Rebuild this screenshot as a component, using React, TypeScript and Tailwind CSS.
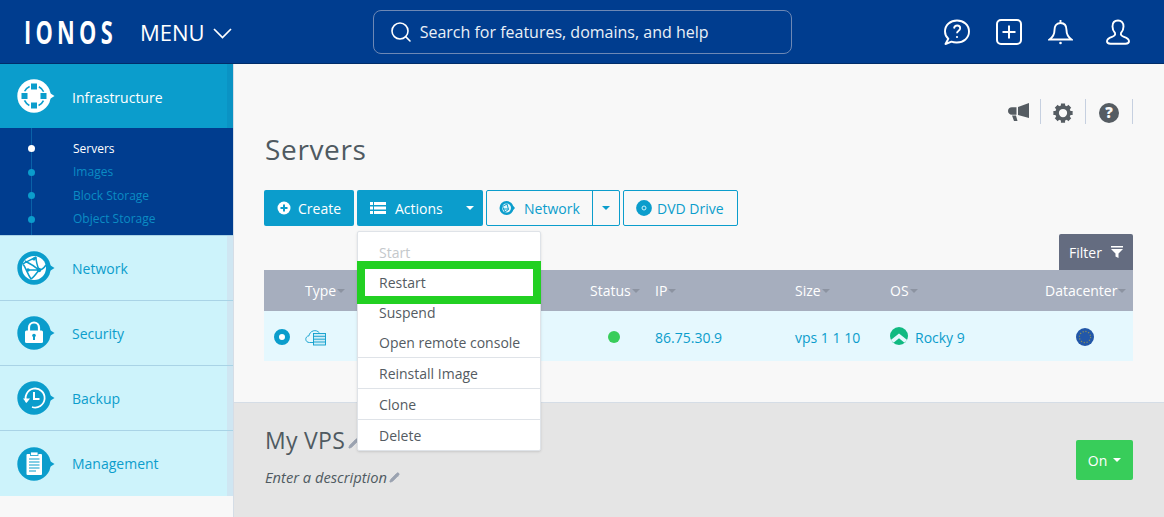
import React from "react";
import { Search, Pencil } from "lucide-react";

function Bubble({ children, light }: { children: React.ReactNode; light?: boolean }) {
  const bg = light ? "#ffffff" : "#0b9dcc";
  return (
    <svg width="38" height="34" viewBox="0 0 38 34" className="shrink-0">
      <circle cx="17" cy="17" r="16.7" fill={bg} />
      <path d="M32 13.5L37.5 17L32 20.5Z" fill={bg} />
      {children}
    </svg>
  );
}

const InfraIcon = () => (
  <Bubble light>
    <circle cx="17" cy="17" r="10.5" fill="none" stroke="#0b9dcc" strokeWidth="1.6" strokeDasharray="7 9.5" strokeDashoffset="-4.700" />
    <rect x="14" y="4.500" width="6" height="6" fill="#0b9dcc" />
    <rect x="14" y="23.500" width="6" height="6" fill="#0b9dcc" />
    <rect x="4.500" y="14" width="6" height="6" fill="#0b9dcc" />
    <rect x="23.500" y="14" width="6" height="6" fill="#0b9dcc" />
  </Bubble>
);
const NetIcon = () => (
  <Bubble>
    <circle cx="17" cy="17" r="12" fill="#fff" />
    <path d="M6 13C10 10 14 9 19 6M6 13C9 17 10 22 14 28M19 6C19 10 20 14 22 19M10 19C14 19 18 19 22 19M22 19C19 23 17 26 14 28M22 19C25 19 27 17 29 14M8 10C12 12 16 14 22 19" fill="none" stroke="#0b9dcc" strokeWidth="1.500" />
    <circle cx="22" cy="19" r="2.200" fill="#0b9dcc" />
    <circle cx="11" cy="19" r="1.800" fill="#0b9dcc" />
    <circle cx="17" cy="8" r="1.600" fill="#0b9dcc" />
  </Bubble>
);
const LockIcon = () => (
  <Bubble>
    <path d="M12 15V11.5a5 5 0 0 1 10 0V15" fill="none" stroke="#fff" strokeWidth="2.2" />
    <rect x="8" y="14.5" width="18" height="12.5" rx="1.5" fill="#fff" />
    <circle cx="17" cy="19.5" r="1.8" fill="#0b9dcc" />
    <rect x="16" y="20" width="2" height="4" fill="#0b9dcc" />
  </Bubble>
);
const ClockIcon = () => (
  <Bubble>
    <path d="M9.5 21A9.5 9.5 0 1 1 15 26" fill="none" stroke="#fff" strokeWidth="1.8" />
    <path d="M6 17.5L9.5 22L13 17.5Z" fill="#fff" />
    <path d="M17 11V18H22.5" fill="none" stroke="#fff" strokeWidth="2" />
  </Bubble>
);
const ClipIcon = () => (
  <Bubble>
    <rect x="9.5" y="7" width="15.5" height="21" rx="1" fill="#fff" />
    <rect x="13.5" y="5" width="7.5" height="3.5" fill="#fff" stroke="#0b9dcc" strokeWidth="0.8" />
    <path d="M12 12H22.5M12 15H22.5M12 18H22.5M12 21H22.5M12 24H19" stroke="#0b9dcc" strokeWidth="1.2" />
  </Bubble>
);

function SideItem({ icon, label }: { icon: React.ReactNode; label: string }) {
  return (
    <div className="relative flex h-[65px] items-center border-b border-[#a9d3e6] bg-[#cdf3fb] pl-[17px] last:border-b-0">
      {icon}
      <span className="ml-[17px] text-[14px] text-[#0b9dcc]">{label}</span>
      <div className="absolute inset-y-0 right-0 w-[6px] bg-[#cfe6f2]" />
    </div>
  );
}

function SubItem({ label, active }: { label: string; active?: boolean }) {
  return (
    <div className="flex h-[23.4px] items-center">
      <span className={`relative ml-[28px] h-[7px] w-[7px] rounded-full ${active ? "bg-white" : "bg-[#0b9dcc]"}`} />
      <span className={`ml-[38px] text-[12px] ${active ? "text-white" : "text-[#0b8cc4]"}`}>{label}</span>
    </div>
  );
}

const Caret = ({ className = "border-t-[#8c93a1]" }: { className?: string }) => (
  <span className={`inline-block h-0 w-0 border-x-[4px] border-t-[4px] border-x-transparent ${className}`} />
);

const Th = ({ label }: { label: string }) => (
  <div className="flex items-center gap-[1px] text-[14px] text-white">
    {label}
    <Caret />
  </div>
);

const PlusCircle = () => (
  <svg width="14" height="14" viewBox="0 0 14 14">
    <circle cx="7" cy="7" r="6.5" fill="#fff" />
    <path d="M7 3.5V10.5M3.5 7H10.5" stroke="#0b9dcc" strokeWidth="2" />
  </svg>
);
const ListIcon = () => (
  <svg width="16" height="12" viewBox="0 0 16 12" fill="#fff">
    <path d="M0 0H3V3H0ZM4 0H16V3H4ZM0 4.5H3V7.5H0ZM4 4.5H16V7.5H4ZM0 9H3V12H0ZM4 9H16V12H4Z" />
  </svg>
);
const NetSmall = () => (
  <svg width="16" height="16" viewBox="0 0 16 16">
    <circle cx="7.500" cy="8" r="7" fill="#0b9dcc" />
    <path d="M14 5.800L16 8L14 10.200Z" fill="#0b9dcc" />
    <circle cx="7.500" cy="8" r="4.500" fill="#e5f6fb" />
    <path d="M3.500 6.500L8 4M3.500 6.500L6 12M8 4L9.500 9.500M6 12L9.500 9.500M3.500 9H9.500" stroke="#0b9dcc" strokeWidth="1" fill="none" />
  </svg>
);
const DiscIcon = () => (
  <svg width="16" height="16" viewBox="0 0 16 16">
    <circle cx="8" cy="8" r="7.900" fill="#0b9dcc" />
    <circle cx="8" cy="8" r="2" fill="none" stroke="#cdf3fb" strokeWidth="1" />
  </svg>
);
const CloudServer = () => (
  <svg width="21" height="18" viewBox="0 0 21 18" fill="none" stroke="#0b9dcc" strokeWidth="0.9">
    <path d="M8 14.5H4.5C-0.5 14.5 -0.2 8 4 7.8C4.6 3 11 0.5 14.5 5" />
    <rect x="8.5" y="5.5" width="12" height="11.5" fill="#cfeef8" />
    <path d="M8.5 8.3H20.5M8.5 11.2H20.5M8.5 14H20.5" />
  </svg>
);
const Rocky = () => (
  <svg width="18" height="18" viewBox="0 0 18 18" className="-mt-[3px]">
    <circle cx="9" cy="9" r="9" fill="#10b981" />
    <path d="M0.800 13L9 6.500L17.200 13L14.500 15.800L9 11.300L3.500 15.800Z" fill="#e5f8fe" />
  </svg>
);
const EuFlag = () => (
  <svg width="18" height="18" viewBox="0 0 18 18" className="-mt-[1px]">
    <circle cx="9" cy="9" r="9" fill="#2257a8" />
    <circle cx="9" cy="9" r="5.6" fill="none" stroke="#8a8f5a" strokeWidth="1.2" strokeDasharray="1.2 1.7" />
  </svg>
);

const Divider = () => <div className="h-[25px] w-px bg-[#c6d0e0]" />;

function MenuItem({ label, muted, divided }: { label: string; muted?: boolean; divided?: boolean }) {
  return (
    <div className={`flex h-[30px] items-center pl-[21px] text-[14px] ${muted ? "text-[#c4c8cb]" : "text-[#545b62]"} ${divided ? "box-content border-t border-[#dfe3e8]" : ""}`}>
      {label}
    </div>
  );
}

export default function App() {
  return (
    <div className="flex h-screen w-full flex-col overflow-hidden bg-[#f8f8f8] font-['Open_Sans',sans-serif]">
      <header className="flex h-[64px] shrink-0 items-center border-b border-[#002d6a] bg-[#003d8f] text-white">
        <div className="ml-[26px] flex w-[88px] justify-center">
          <span className="origin-center scale-x-[0.66] text-[33px] font-bold leading-none tracking-[6.500px]">IONOS</span>
        </div>
        <span className="ml-[26px] text-[22px] leading-none">MENU</span>
        <svg width="19" height="11" viewBox="0 0 19 11" fill="none" stroke="#fff" strokeWidth="1.700" className="ml-[8px] mt-[3px]">
          <path d="M1 1L9.500 9.500L18 1" />
        </svg>
        <div className="ml-[141px] flex h-[44px] w-[419px] items-center rounded-[8px] border border-[#6d88b5] pl-[15px]">
          <Search size={24} strokeWidth={1.6} />
          <span className="ml-[7px] text-[16px] text-[#eaf0f7]">Search for features, domains, and help</span>
        </div>
        <div className="ml-auto mr-[34px] flex items-center gap-[26px]">
          <svg width="26" height="26" viewBox="0 0 26 26" fill="none" stroke="#fff" strokeWidth="1.900">
            <path d="M13 1.500C6.500 1.500 1 6 1 12.500c0 3 1.300 5.500 3.300 7.300L1.500 25l6-2.300c1.700.6 3.500.9 5.500.8 6.500 0 12-4.500 12-11S19.500 1.500 13 1.500Z" strokeLinejoin="round" />
            <path d="M10 9.500c.3-2 1.500-3 3.200-3 1.800 0 3 1.200 3 2.800 0 2.500-3.200 2.500-3.200 5" strokeWidth="1.800" />
            <circle cx="13" cy="18" r="1.100" fill="#fff" stroke="none" />
          </svg>
          <svg width="26" height="26" viewBox="0 0 26 26" fill="none" stroke="#fff" strokeWidth="2">
            <rect x="1" y="1" width="24" height="24" rx="4" />
            <path d="M13 6.500V19.500M6.500 13H19.500" strokeWidth="2" />
          </svg>
          <svg width="25" height="26" viewBox="0 0 25 26" fill="none" stroke="#fff" strokeWidth="1.900">
            <path d="M12.500 4C7.800 4 6.500 7.500 6.500 11c0 4-1.500 7-5 9.500H23.500c-3.500-2.500-5-5.500-5-9.500 0-3.500-1.300-7-6-7ZM12.500 1V4" />
            <circle cx="12.500" cy="24" r="1.300" fill="#fff" stroke="none" />
          </svg>
          <svg width="24" height="26" viewBox="0 0 24 26" fill="none" stroke="#fff" strokeWidth="1.900" className="ml-[7px]">
            <path d="M12 1.500c-3.500 0-5.500 2.500-5.500 6 0 3 1 5 2.500 6.500.6 1.600-.5 3-3 3.900C3 19 1 20.300 1 22.300c0 1.600 1.600 2.400 3.500 2.400h15c1.900 0 3.500-.8 3.500-2.400 0-2-2-3.300-5-4.400-2.500-.9-3.600-2.300-3-3.900 1.500-1.500 2.500-3.500 2.500-6.500 0-3.500-2-6-5.500-6Z" />
          </svg>
        </div>
      </header>

      <div className="flex min-h-0 flex-1">
        <aside className="w-[234px] shrink-0 border-r border-[#d5dde6]">
          <div className="relative flex h-[64px] items-center bg-[#0b9dcc] pl-[17px] text-white">
            <InfraIcon />
            <span className="ml-[17px] mt-[2px] text-[14px]">Infrastructure</span>
            <div className="absolute inset-y-0 right-0 w-[6px] bg-[#0a93c4]" />
            <div className="absolute left-[25px] top-full h-0 w-0 border-x-[6px] border-t-[7px] border-x-transparent border-t-[#0b9dcc]" />
          </div>
          <div className="relative h-[107px] bg-[#003d8f] pt-[9.3px]">
            <div className="absolute inset-y-0 left-[31px] w-px bg-[#0a62a8]" />
            <SubItem label="Servers" active />
            <SubItem label="Images" />
            <SubItem label="Block Storage" />
            <SubItem label="Object Storage" />
          </div>
          <div className="border-t border-[#a9d3e6]">
            <SideItem icon={<NetIcon />} label="Network" />
            <SideItem icon={<LockIcon />} label="Security" />
            <SideItem icon={<ClockIcon />} label="Backup" />
            <SideItem icon={<ClipIcon />} label="Management" />
          </div>
        </aside>

        <main className="flex min-w-0 flex-1 flex-col">
          <section className="h-[339px] shrink-0 border-b border-[#d5dde6] pl-[30px] pr-[31px]">
            <div className="flex justify-end pt-[35px]">
              <div className="flex items-center gap-[11px]">
                <svg width="21" height="19" viewBox="0 0 21 19" fill="#555c62" className="mt-[2px]">
                  <path d="M21 0V15L10 12V4ZM8.500 4.300V11.700H4C1.500 11.700 0 10 0 8s1.500-3.700 4-3.700ZM4 12.500H8L9.500 18H6Z" />
                </svg>
                <Divider />
                <svg width="22" height="22" viewBox="0 0 24 24" className="mt-[2px]">
                  <path fill="none" stroke="#555c62" strokeWidth="4.500" d="M12 1.500V5M12 19V22.500M1.500 12H5M19 12H22.500M4.600 4.600L7 7M17 17L19.400 19.400M4.600 19.400L7 17M17 7L19.400 4.600" />
                  <circle cx="12" cy="12" r="6.500" fill="none" stroke="#555c62" strokeWidth="4" />
                </svg>
                <Divider />
                <div className="ml-[2px] mt-[2px] flex h-[20px] w-[20px] items-center justify-center rounded-full bg-[#555c62] text-[15px] font-extrabold leading-none text-[#f8f8f8]">?</div>
                <div className="ml-[2px]"><Divider /></div>
              </div>
            </div>
            <h1 className="mt-[6px] pl-px text-[28px] leading-[38px] tracking-[0.65px] text-[#4f5a61]">Servers</h1>

            <div className="mt-[22px] flex h-[36px] gap-[3px] text-[14px]">
              <div className="flex w-[90px] items-center gap-[7px] rounded-[2px] bg-[#0b9dcc] pl-[13px] text-white">
                <PlusCircle />
                Create
              </div>
              <div className="relative flex w-[126px] items-center rounded-[2px] bg-[#0b9dcc] pl-[13px] text-white">
                <ListIcon />
                <span className="ml-[9px]">Actions</span>
                <span className="ml-auto mr-[9px] flex"><Caret className="border-t-white" /></span>

                <div className="absolute left-0 top-[41px] z-10 w-[184px] rounded-[2px] border border-[#dfe3e8] bg-white pt-[5px] shadow-sm">
                  <MenuItem label="Start" muted />
                  <MenuItem label="Restart" />
                  <MenuItem label="Suspend" />
                  <MenuItem label="Open remote console" />
                  <MenuItem label="Reinstall Image" divided />
                  <MenuItem label="Clone" divided />
                  <MenuItem label="Delete" divided />
                  <div className="absolute -left-px top-[29px] h-[43px] w-[184px] border-[8px] border-[#22d022]" />
                </div>
              </div>
              <div className="flex w-[134px] rounded-[2px] border border-[#0b9dcc] text-[#0b9dcc]">
                <div className="flex flex-1 items-center pl-[12px]">
                  <NetSmall />
                  <span className="ml-[9px]">Network</span>
                </div>
                <div className="flex w-[27px] items-center justify-center border-l border-[#0b9dcc]"><Caret className="border-t-[#0b9dcc]" /></div>
              </div>
              <div className="flex w-[115px] items-center gap-[5px] rounded-[2px] border border-[#0b9dcc] pl-[12px] text-[#0b9dcc]">
                <DiscIcon />
                DVD Drive
              </div>
            </div>

            <div className="mt-[8px] flex justify-end">
              <div className="flex h-[36px] w-[74px] items-center rounded-t-[2px] bg-[#646c80] pl-[10px] text-[14px] text-white">
                Filter
                <svg width="12" height="12" viewBox="0 0 12 12" fill="#fff" className="ml-[9px]">
                  <path d="M0 0H12V1.500H0ZM0 3H12L7.500 7.500V12L4.500 10.500V7.500Z" />
                </svg>
              </div>
            </div>

            <div className="grid h-[41px] grid-cols-[41px_285px_65px_140px_95px_155px_88px] items-center bg-[#a6aebe]">
              <div />
              <Th label="Type" />
              <Th label="Status" />
              <Th label="IP" />
              <Th label="Size" />
              <Th label="OS" />
              <Th label="Datacenter" />
            </div>
            <div className="grid h-[50px] grid-cols-[41px_285px_65px_140px_95px_155px_88px] items-center bg-[#e5f8fe] pt-[2px] text-[14px] text-[#0b9dcc]">
              <div className="pl-[10px]">
                <div className="h-[16px] w-[16px] rounded-full border-[5px] border-[#0b9dcc] bg-white" />
              </div>
              <CloudServer />
              <div className="pl-[18px]">
                <div className="h-[12px] w-[12px] rounded-full bg-[#38cd5a]" />
              </div>
              <div>86.75.30.9</div>
              <div>vps 1 1 10</div>
              <div className="flex items-center gap-[7px]">
                <Rocky />
                Rocky 9
              </div>
              <div className="pl-[31px]"><EuFlag /></div>
            </div>
          </section>

          <section className="flex flex-1 items-start justify-between bg-[#e5e5e5] pl-[30px] pr-[31px]">
            <div className="pl-px pt-[22px]">
              <div className="flex items-center gap-[3px]">
                <span className="text-[23px] leading-[30px] tracking-[0.3px] text-[#4f5a61]">My VPS</span>
                <Pencil size={11} className="mt-[6px] fill-[#9aa2b0] text-[#9aa2b0]" />
              </div>
              <div className="mt-[11px] flex items-center gap-[2px] text-[14.7px] italic text-[#4f5a61]">
                Enter a description
                <Pencil size={11} className="fill-[#9aa2b0] text-[#9aa2b0]" />
              </div>
            </div>
            <div className="mt-[37px] flex h-[40px] w-[57px] items-center justify-center gap-[6px] rounded-[2px] bg-[#38cd5a] text-[14px] text-white">
              On
              <Caret className="border-t-white" />
            </div>
          </section>
        </main>
      </div>
    </div>
  );
}
